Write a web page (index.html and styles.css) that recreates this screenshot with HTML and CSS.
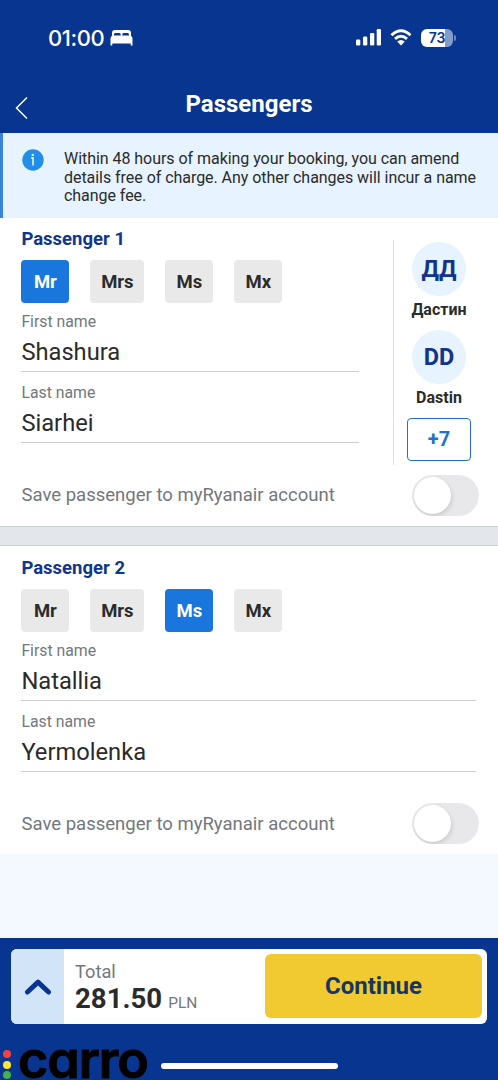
FILE: index.html
```html
<!DOCTYPE html>
<html lang="en">
<head>
<meta charset="utf-8">
<title>Passengers</title>
<link rel="stylesheet" href="styles.css">
</head>
<body>
<header class="top">
  <div class="status">
    <div class="status-left">
      <span class="clock">01:00</span>
      <svg class="bed" width="23" height="16" viewBox="0 0 23 16" fill="#fff"><path d="M2 7V3Q2 0 5 0H18Q21 0 21 3V7H19V4.500Q19 3 17.600 3H13.600Q12.300 3 12.300 4.500V6H10.700V4.500Q10.700 3 9.400 3H5.400Q4 3 4 4.500V7Z"/><path d="M3 5.500H20Q22.500 5.800 22.500 8.500V15.500H20.700V13.500H2.300V15.500H.5V8.500Q.5 5.800 3 5.500Z"/></svg>
    </div>
    <div class="status-right">
      <svg width="26" height="17" viewBox="0 0 26 17" fill="#fff"><rect x="0" y="10.500" width="4.300" height="6" rx="1.300"/><rect x="7" y="7.500" width="4.300" height="9" rx="1.300"/><rect x="14" y="4" width="4.300" height="12.500" rx="1.300"/><rect x="20.700" y="0" width="4.300" height="16.500" rx="1.300"/></svg>
      <svg class="wifi" width="22" height="17" viewBox="0 0 22 17"><path d="M1.500 6.200Q11-2.800 20.500 6.200M5 9.900Q11 4.400 17 9.900" fill="none" stroke="#fff" stroke-width="2.900"/><path d="M7.200 12.500Q11 9.500 14.800 12.500L11 16.500Z" fill="#fff"/></svg>
      <span class="battery">73</span><span class="battery-tip"></span>
    </div>
  </div>
  <div class="nav">
    <svg class="back" width="14" height="24" viewBox="0 0 14 24"><path d="M12 1.500L1.500 12L12 22.500" fill="none" stroke="#fff" stroke-width="1.500"/></svg>
    <h1 class="title">Passengers</h1>
  </div>
</header>
<main>
  <div class="notice">
    <svg class="info" width="22" height="22" viewBox="0 0 22 22"><circle cx="11" cy="11" r="10.700" fill="#218ee8"/><circle cx="10.800" cy="5.900" r="1.200" fill="#e8f4fd"/><path d="M9.200 8.900H11V16.500" fill="none" stroke="#e8f4fd" stroke-width="1.600"/></svg>
    <p class="notice-text">Within 48 hours of making your booking, you can amend<br>details free of charge. Any other changes will incur a name<br>change fee.</p>
  </div>
  <section class="passenger">
    <div class="details">
      <div class="form">
        <h2 class="heading">Passenger 1</h2>
        <div class="chips"><span class="chip on">Mr</span><span class="chip wide">Mrs</span><span class="chip">Ms</span><span class="chip">Mx</span></div>
        <div class="field"><label class="label">First name</label><div class="value">Shashura</div></div>
        <div class="field"><label class="label">Last name</label><div class="value">Siarhei</div></div>
      </div>
      <aside class="saved">
        <div class="avatar">ДД</div><div class="who">Дастин</div>
        <div class="avatar">DD</div><div class="who">Dastin</div>
        <div class="more">+7</div>
      </aside>
    </div>
    <div class="save"><span class="save-text">Save passenger to myRyanair account</span><span class="toggle"><i class="knob"></i></span></div>
  </section>
  <div class="divider"></div>
  <section class="passenger last">
    <div class="details">
      <div class="form full">
        <h2 class="heading">Passenger 2</h2>
        <div class="chips"><span class="chip">Mr</span><span class="chip wide">Mrs</span><span class="chip on">Ms</span><span class="chip">Mx</span></div>
        <div class="field"><label class="label">First name</label><div class="value">Natallia</div></div>
        <div class="field"><label class="label">Last name</label><div class="value">Yermolenka</div></div>
      </div>
    </div>
    <div class="save"><span class="save-text">Save passenger to myRyanair account</span><span class="toggle"><i class="knob"></i></span></div>
  </section>
</main>
<footer class="footer">
  <div class="bar">
    <div class="expand"><svg width="28" height="18" viewBox="0 0 28 18"><path d="M3.500 14L14 4.200L24.500 14" fill="none" stroke="#073590" stroke-width="5" stroke-linecap="round" stroke-linejoin="round"/></svg></div>
    <div class="total"><div class="total-label">Total</div><div class="amount"><b class="sum">281.50</b><span class="currency">PLN</span></div></div>
    <div class="continue">Continue</div>
  </div>
  <div class="home-row">
    <div class="brand"><span class="lights"><i class="light red"></i><i class="light yellow"></i><i class="light green"></i></span><span class="wordmark">carro</span></div>
    <div class="home"></div>
  </div>
</footer>
</body>
</html>
```
FILE: styles.css
```css
* { box-sizing: border-box; margin: 0; padding: 0; }
body { width: 498px; height: 1080px; overflow: hidden; display: flex; flex-direction: column; background: #f4f8ff; font-family: Roboto, "Noto Sans", sans-serif; color: #2b2b2b; }
svg { display: block; }
.top { height: 133px; flex: none; background: #073590; color: #fff; }
.status { height: 75px; display: flex; justify-content: space-between; padding: 0 42px 0 48px; align-items: center; }
.status-left, .status-right { display: flex; align-items: center; }
.clock { font: 500 22px/26px Inter, sans-serif; width: 62px; letter-spacing: -.4px; white-space: nowrap; }
.bed { margin-top: 1px; }
.wifi { margin: 0 9px 0 8px; }
.battery { width: 32px; height: 18px; border-radius: 6px; background: linear-gradient(90deg, #fff 74%, #859bc9 74%); color: #073590; font: 600 14px/18px Inter, sans-serif; text-align: center; }
.battery-tip { width: 2px; height: 6px; margin-left: 1px; background: #6f88bd; border-radius: 0 2px 2px 0; }
.nav { height: 58px; display: grid; grid-template-columns: 36px 1fr 36px; align-items: center; }
.back { margin: 7px 0 0 15px; }
.title { text-align: center; font-size: 24px; line-height: 30px; font-weight: 700; margin-top: -1px; }
.notice { height: 85px; background: #e7f3fe; border-left: 3px solid #3b82dc; display: flex; padding: 16px 0 0 19px; }
.notice-text { margin: 1px 0 0 20px; font-size: 16px; line-height: 18.700px; letter-spacing: -.045px; white-space: nowrap; }
.info { flex: none; }
.passenger { height: 308px; background: #fff; }
.passenger.last { padding-top: 1px; }
.details { display: flex; height: 246.500px; }
.form { width: 359px; padding: 9px 0 0 21.400px; }
.form.full { width: 476px; }
.heading { font-size: 18.500px; line-height: 24px; color: #12358c; font-weight: 700; }
.chips { display: flex; margin: 9px 0 0; gap: 21px; height: 43px; }
.chip { width: 48px; background: #e9e9e9; border-radius: 4px; font-size: 18.500px; line-height: 44px; font-weight: 700; text-align: center; }
.chip.wide { width: 54px; }
.chip.on { background: #1976dc; color: #fff; }
.field { height: 70.500px; padding-top: 11px; border-bottom: 1px solid #cfcfcf; }
.chips + .field { height: 69px; padding-top: 9px; }
.label { display: block; color: #73777e; font-size: 15.800px; line-height: 20px; }
.value { font-size: 23.700px; line-height: 30px; margin-top: 5px; }
.saved { width: 91px; height: 225px; margin: 22px 0 0 34px; border-left: 1px solid #dedede; display: flex; flex-direction: column; align-items: center; padding-top: 2px; }
.avatar { width: 54px; height: 54px; border-radius: 50%; background: #e7f3fe; color: #12358c; text-align: center; font-weight: 700; font-size: 23.500px; line-height: 54px; }
.who { font-size: 16px; line-height: 20px; font-weight: 700; margin: 4px 0 10px; }
.more { width: 64px; height: 43px; flex: none; border: 1px solid #2472c8; border-radius: 4px; color: #2472c8; text-align: center; font-size: 20px; line-height: 41px; font-weight: 700; }
.save { display: flex; justify-content: space-between; align-items: center; padding: 0 19px 0 21.500px; height: 61px; }
.last .save { height: 60px; }
.save-text { color: #73777e; font-size: 18.520px; white-space: nowrap; }
.toggle { width: 67px; height: 41px; border-radius: 21px; background: #e8e8ea; padding: 2px; overflow: hidden; }
.knob { display: block; width: 37px; height: 37px; border-radius: 50%; background: #fff; box-shadow: 1px 2px 4px #0002; }
.divider { height: 20px; background: #e3e6eb; border: solid #cfd2dc; border-width: 1px 0; }
.footer { margin-top: auto; height: 142px; flex: none; background: #073590; padding-top: 11px; }
.bar { margin: 0 11px; height: 75px; background: #fff; border-radius: 6px; display: flex; overflow: hidden; }
.expand { width: 53px; background: #d2e4f8; display: flex; align-items: center; justify-content: center; }
.total { width: 201px; padding: 12px 0 0 11px; }
.total-label { font-size: 18.300px; line-height: 22px; color: #73777e; }
.amount { display: flex; align-items: baseline; gap: 6px; line-height: 32px; }
.sum { font-size: 27.600px; }
.currency { font-size: 15.500px; color: #73777e; }
.continue { width: 217px; height: 64px; margin-top: 5px; background: #f1c931; border-radius: 6px; color: #163561; text-align: center; font-size: 24px; line-height: 64px; font-weight: 700; }
.home-row { display: flex; height: 56px; }
.brand { width: 161px; display: flex; }
.lights { display: flex; flex-direction: column; gap: 2.500px; padding: 26px 0 0 3px; }
.light { width: 8px; height: 8px; border-radius: 50%; }
.red { background: #f2423d; }
.yellow { background: #ffe62e; }
.green { background: #42b149; }
.wordmark { color: #000; font: 600 51px/36px Inter, sans-serif; font-feature-settings: "cv11"; letter-spacing: -1px; height: 36px; margin: 18px 0 0 7px; white-space: nowrap; -webkit-text-stroke: 1px #000; transform: scaleX(1.02); transform-origin: left; }
.home { width: 177px; height: 6px; border-radius: 3px; background: #fff; margin-top: 39px; }
```
